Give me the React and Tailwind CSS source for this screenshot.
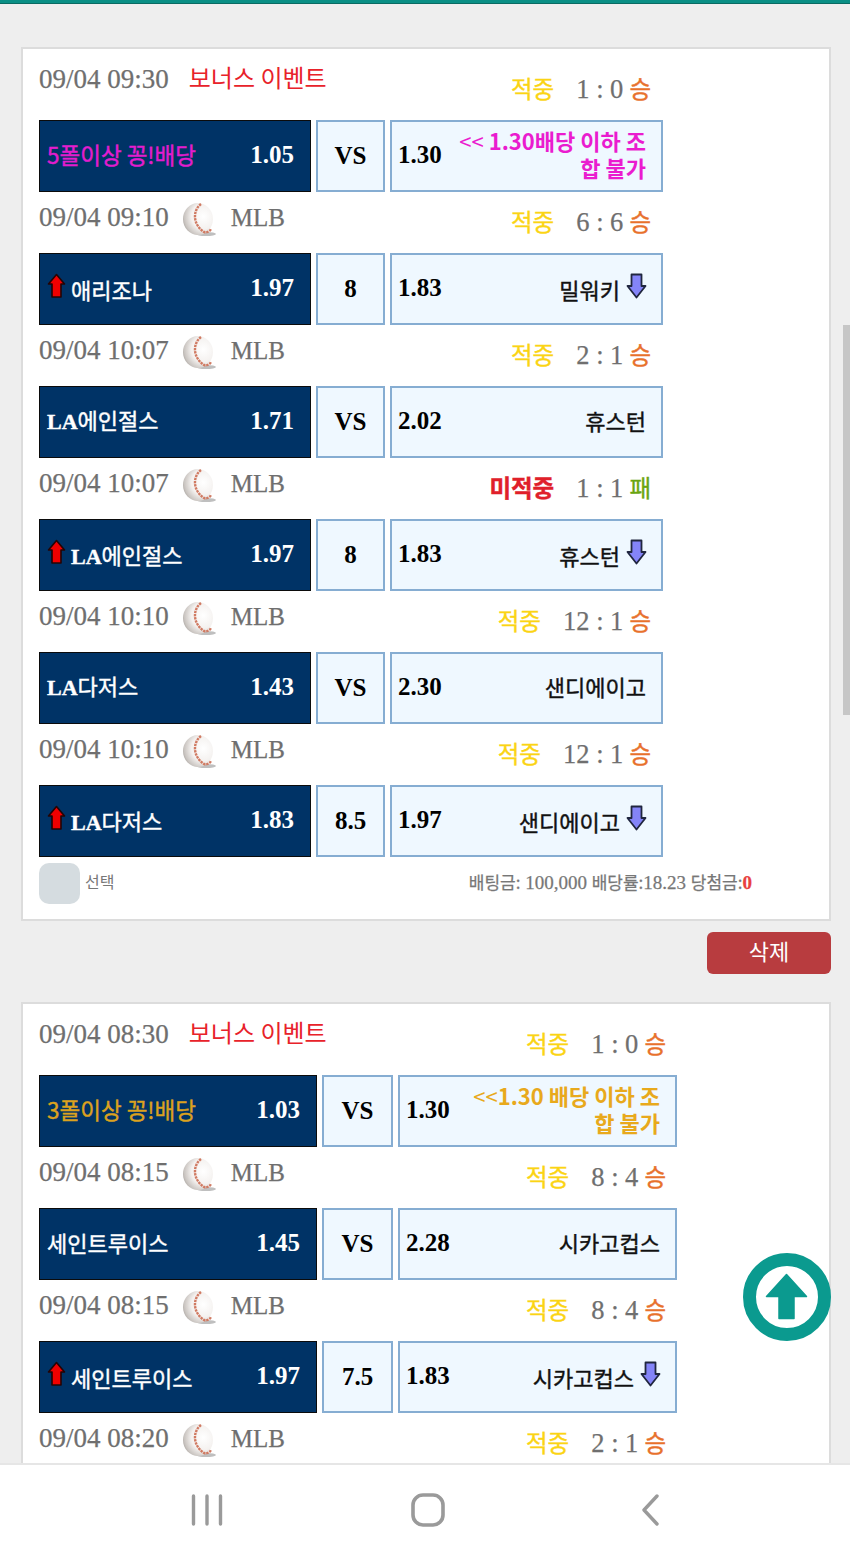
import React from 'react';

const serif = "font-['Liberation_Serif','Noto_Sans_CJK_KR',serif]";
const sans = "font-['Noto_Sans_CJK_KR','Noto_Sans',sans-serif]";
const medium = '[-webkit-text-stroke:0.4px_currentColor]';
const thinSerif = '[-webkit-text-stroke:0.25px_currentColor]';

const firstCard = [
    { time: '09/04 09:30', event: true, hit: '적중', score: '1 : 0', result: '승', home: '5폴이상 꽁!배당', homeClass: 'text-[#e41ccf] text-[22.5px]', h: '1.05', mid: 'VS', a: '1.30', note: '1.30배당 이하 조', notePrefix: '<< ', noteEnd: '합 불가', noteClass: 'text-[#ea1ccf]' },
    { time: '09/04 09:10', hit: '적중', score: '6 : 6', result: '승', home: '애리조나', h: '1.97', mid: '8', a: '1.83', away: '밀워키', arrows: true },
    { time: '09/04 10:07', hit: '적중', score: '2 : 1', result: '승', latin: 'LA', home: '에인절스', h: '1.71', mid: 'VS', a: '2.02', away: '휴스턴' },
    { time: '09/04 10:07', hit: '미적중', score: '1 : 1', result: '패', latin: 'LA', home: '에인절스', h: '1.97', mid: '8', a: '1.83', away: '휴스턴', arrows: true },
    { time: '09/04 10:10', hit: '적중', score: '12 : 1', result: '승', latin: 'LA', home: '다저스', h: '1.43', mid: 'VS', a: '2.30', away: '샌디에이고' },
    { time: '09/04 10:10', hit: '적중', score: '12 : 1', result: '승', latin: 'LA', home: '다저스', h: '1.83', mid: '8.5', a: '1.97', away: '샌디에이고', arrows: true },
];

const secondCard = [
    { time: '09/04 08:30', event: true, hit: '적중', score: '1 : 0', result: '승', home: '3폴이상 꽁!배당', homeClass: 'text-[#dca21e] text-[22.5px]', h: '1.03', mid: 'VS', a: '1.30', note: '1.30 배당 이하 조', notePrefix: '<<', noteEnd: '합 불가', noteClass: 'text-[#e8a91c]' },
    { time: '09/04 08:15', hit: '적중', score: '8 : 4', result: '승', home: '세인트루이스', h: '1.45', mid: 'VS', a: '2.28', away: '시카고컵스' },
    { time: '09/04 08:15', hit: '적중', score: '8 : 4', result: '승', home: '세인트루이스', h: '1.97', mid: '7.5', a: '1.83', away: '시카고컵스', arrows: true },
    // last row runs under the nav bar, only its header line shows
    { time: '09/04 08:20', hit: '적중', score: '2 : 1', result: '승' },
];

const Ball = () => (
    <svg width="38" height="36" viewBox="0 0 38 36" className="shrink-0">
        <defs>
            <radialGradient id="ballFill" cx="0.68" cy="0.42" r="0.8">
                <stop offset="0" stopColor="#ffffff" />
                <stop offset="0.5" stopColor="#f4f1ef" />
                <stop offset="0.8" stopColor="#c9c4c0" />
                <stop offset="1" stopColor="#8f8a86" />
            </radialGradient>
            <filter id="soft"><feGaussianBlur stdDeviation="0.7" /></filter>
        </defs>
        <g filter="url(#soft)">
            <ellipse cx="26" cy="32" rx="10" ry="2" fill="#bfbfbf" />
            <ellipse cx="18" cy="17" rx="15" ry="16" fill="url(#ballFill)" />
            <path d="M21 2 C13 8 12 22 24 30 C27 31 30 29 31 27" fill="none" stroke="#d07a62" strokeWidth="2.4" strokeDasharray="2.4 0.8" />
        </g>
    </svg>
);

const UpArrow = () => (
    <svg width="19" height="26" viewBox="0 0 19 26" className="shrink-0">
        <path d="M9.5 1.5 L17.5 11 H14 V24 H5 V11 H1.5 Z" fill="#f00000" stroke="#240404" strokeWidth="1.6" strokeLinejoin="round" />
    </svg>
);

const DownArrow = () => (
    <svg width="21" height="26" viewBox="0 0 21 26" className="shrink-0">
        <path d="M5.5 1.5 H15.5 V13 H19.5 L10.5 24.5 L1.5 13 H5.5 Z" fill="#8484f8" stroke="#20263f" strokeWidth="1.8" strokeLinejoin="round" />
    </svg>
);

const MatchHeader = ({ row, headerWidth }) => (
    <div className={`flex items-start justify-between ${headerWidth} ${row.event ? 'h-[71px]' : 'h-[61px]'}`}>
        <div className={`flex items-center ${row.event ? 'h-[50px] pt-[10px]' : 'h-[50px]'}`}>
            <span className={`${serif} ${thinSerif} text-[27px] text-[#6f6f6f] leading-none`}>{row.time}</span>
            {row.event ? (
                <span className={`${sans} text-[24px] text-[#e8222a] ml-[20px] pb-[4px] leading-none`}>보너스 이벤트</span>
            ) : (
                <>
                    <span className="ml-[11px] mt-[6px]"><Ball /></span>
                    <span className={`${serif} ${thinSerif} text-[25px] text-[#6f6f6f] ml-[13px] leading-none`}>MLB</span>
                </>
            )}
        </div>
        <div className={`flex items-center ${row.event ? 'h-[60px] pt-[20px]' : 'h-[60px]'}`}>
            <span className={`${sans} ${medium} text-[23.5px] pb-[1px] leading-none ${row.hit === '적중' ? 'text-[#fbd414]' : 'text-[#e0202a] font-bold'}`}>{row.hit}</span>
            <span className={`${serif} ${thinSerif} text-[26.5px] text-[#6f6f6f] ml-[22px] mr-[6px] leading-none whitespace-pre`}>{row.score}</span>
            <span className={`${sans} ${medium} text-[23.5px] pb-[1px] leading-none ${row.result === '승' ? 'text-[#e8712c]' : 'text-[#6aa510]'}`}>{row.result}</span>
        </div>
    </div>
);

const MatchBoxes = ({ row, gridClass }) => (
    <div className={`grid h-[72px] gap-x-[5px] ${gridClass}`}>
        {/* Home */}
        <div className="flex items-center justify-between bg-[#003366] border border-[#0b0b0b] pl-[7px] pr-[16px]">
            <div className="flex items-center min-w-0">
                {row.arrows && <span className="mr-[5px] -mt-[6px]"><UpArrow /></span>}
                <span className={`${sans} ${medium} leading-none whitespace-nowrap ${row.arrows ? '' : 'pb-[4px]'} ${row.homeClass || 'text-white text-[22px]'}`}>
                    {row.latin && <span className={`${serif} font-bold`}>{row.latin}</span>}
                    {row.home}
                </span>
            </div>
            <span className={`${serif} text-[25px] font-bold text-white pb-[4px] leading-none`}>{row.h}</span>
        </div>
        {/* Middle */}
        <div className={`${serif} flex items-center justify-center bg-[#eff8ff] border-2 border-[#86add2] text-[25px] font-bold text-black`}>
            {row.mid}
        </div>
        {/* Away */}
        <div className="flex items-center justify-between bg-[#eff8ff] border-2 border-[#86add2] pl-[6px] pr-[15px]">
            <span className={`${serif} text-[25px] font-bold text-black pb-[3px] leading-none`}>{row.a}</span>
            {row.note ? (
                <div className={`${sans} text-[22px] font-bold leading-[27px] text-right whitespace-nowrap pb-[4px] ${row.noteClass}`}>
                    <div><span className="font-normal">{row.notePrefix}</span>{row.note}</div>
                    <div>{row.noteEnd}</div>
                </div>
            ) : (
                <div className="flex items-center">
                    <span className={`${sans} ${medium} text-[22px] text-[#111] leading-none ${row.arrows ? '' : 'pb-[4px]'}`}>{row.away}</span>
                    {row.arrows && <span className="ml-[6px] mr-[-1px] -mt-[6px]"><DownArrow /></span>}
                </div>
            )}
        </div>
    </div>
);

const BetCard = ({ rows, gridClass, headerWidth, children }) => (
    <div className="bg-white border-2 border-[#dcdcdc] pl-[16px]">
        {rows.map((row, idx) => (
            <div key={idx}>
                <MatchHeader row={row} headerWidth={headerWidth} />
                {row.home && <MatchBoxes row={row} gridClass={gridClass} />}
            </div>
        ))}
        {children}
    </div>
);

const App = () => {
    return (
        <div className="relative flex flex-col w-[850px] h-[1561px] overflow-hidden bg-[#eeeeee]">
            {/* Top strip */}
            <div className="h-[4px] shrink-0 bg-[#0a8f85] border-b border-[#0a6a62]"></div>

            <div className="flex-1 min-h-0 overflow-hidden pt-[43px] pl-[21px] pr-[19px]">
                <BetCard rows={firstCard} gridClass="grid-cols-[272px_69px_273px]" headerWidth="w-[612px]">
                    <div className="flex items-center justify-between h-[62px] pb-[10px] pr-[77px]">
                        <div className="flex items-center">
                            <div className="w-[41px] h-[41px] rounded-[10px] bg-[#d5dce0]"></div>
                            <span className={`${sans} text-[16px] text-[#777] ml-[5px] pb-[4px] leading-[24px]`}>선택</span>
                        </div>
                        <div className={`${serif} ${thinSerif} text-[19px] text-[#777] pb-[2px] leading-[26px] whitespace-pre`}>
                            <span className={`${sans} text-[17px]`}>배팅금:</span> 100,000 <span className={`${sans} text-[17px]`}>배당률:</span>18.23 <span className={`${sans} text-[17px]`}>당첨금:</span><span className="font-bold text-[#e84040]">0</span>
                        </div>
                    </div>
                </BetCard>

                <div className="flex justify-end mt-[11px] mb-[28px]">
                    <button className={`${sans} w-[124px] h-[42px] rounded-[6px] bg-[#b83c3f] pb-[5px] text-[22px] text-white`}>삭제</button>
                </div>

                <BetCard rows={secondCard} gridClass="grid-cols-[278px_71px_279px]" headerWidth="w-[627px]" />
            </div>

            {/* Bottom nav */}
            <div className="relative z-10 flex items-start h-[98px] shrink-0 bg-white border-t-2 border-[#e6e6e6] pt-[28px] pl-[190px]">
                <svg width="34" height="34" viewBox="0 0 34 34" fill="none" stroke="#9a9a9a" strokeWidth="3.4" strokeLinecap="round">
                    <path d="M3.5 3 V31 M17 3 V31 M30.5 3 V31" />
                </svg>
                <svg width="34" height="34" viewBox="0 0 34 34" fill="none" stroke="#9a9a9a" strokeWidth="3.6" className="ml-[187px]">
                    <rect x="2" y="2" width="30" height="30" rx="10" />
                </svg>
                <svg width="22" height="34" viewBox="0 0 22 34" fill="none" stroke="#9a9a9a" strokeWidth="3.4" strokeLinecap="round" strokeLinejoin="round" className="ml-[195px]">
                    <path d="M17 3 L4 17 L17 31" />
                </svg>
            </div>

            {/* Page scrollbar */}
            <div className="absolute right-0 top-[325px] w-[7px] h-[390px] bg-[#c6c6c6]"></div>

            {/* Scroll to top */}
            <svg width="88" height="88" viewBox="0 0 88 88" className="absolute left-[743px] top-[1253px]">
                <circle cx="44" cy="44" r="37.5" fill="#fff" stroke="#0b9a8f" strokeWidth="13" />
                <path d="M43.5 21.5 L63.5 43.5 H51 V65.5 H36 V43.5 H23.5 Z" fill="#0b9a8f" stroke="#0b9a8f" strokeWidth="1.5" strokeLinejoin="round" />
            </svg>
        </div>
    );
};

export default App;
